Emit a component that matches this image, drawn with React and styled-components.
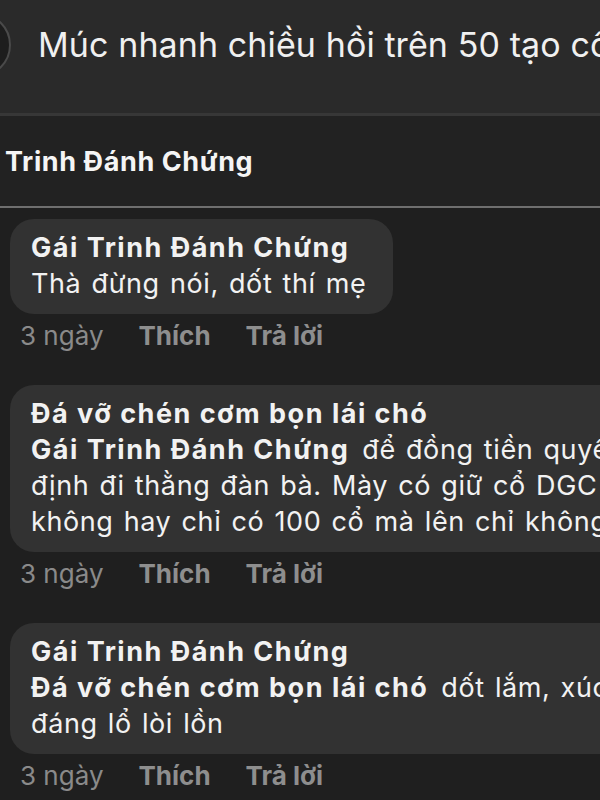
import React from "react";
import styled, { createGlobalStyle } from "styled-components";

const GlobalStyle = createGlobalStyle`
  html, body {
    margin: 0;
    padding: 0;
    background: #1f1f1f;
  }
  body {
    font-family: Inter, "Noto Sans", sans-serif;
    color: #f2f2f2;
  }
`;

const Page = styled.div`
  width: 600px;
  height: 800px;
  overflow: hidden;
  background: #1f1f1f;
`;

const TopBar = styled.header`
  display: flex;
  align-items: center;
  gap: 27px;
  height: 116px;
  padding-bottom: 24px;
  box-sizing: border-box;
  background: #2a2a2a;
  border-bottom: 3px solid #373737;
  overflow: hidden;
`;

const Avatar = styled.div`
  flex: none;
  width: 60px;
  height: 60px;
  margin-left: -53px;
  border-radius: 50%;
  background: #1d1d1d;
  border: 2px solid #4a4a4a;
`;

const Title = styled.h1`
  margin: 0;
  font-size: 34px;
  font-weight: 400;
  letter-spacing: 0.1px;
  white-space: nowrap;
  color: #f0f0f0;
`;

const PostHeader = styled.div`
  display: flex;
  align-items: center;
  height: 90px;
  padding-left: 5px;
  background: #222222;
  border-bottom: 2px solid #6f6f6f;
  font-size: 27px;
  font-weight: 700;
  letter-spacing: 0.6px;
  color: #f5f5f5;
`;

const List = styled.section`
  display: flex;
  flex-direction: column;
  gap: 31px;
  padding: 11px 0 0 10px;
`;

const Comment = styled.article`
  display: flex;
  flex-direction: column;
  align-items: flex-start;
`;

const Bubble = styled.div`
  box-sizing: border-box;
  width: ${(p) => p.$width}px;
  padding: 11px 22px 12px 21px;
  border-radius: 24px;
  background: #323232;
  font-size: 27px;
  line-height: 36px;
  letter-spacing: 0.6px;
  word-spacing: 2px;
`;

const Line = styled.div`
  white-space: nowrap;
`;

const Name = styled.span`
  font-weight: 700;
  letter-spacing: 1.5px;
  word-spacing: 0;
  margin-right: ${(p) => (p.$inline ? "13px" : "0")};
`;

const Meta = styled.div`
  display: flex;
  gap: 35px;
  margin-top: 4px;
  padding-left: 10px;
  font-size: 26px;
  line-height: 36px;
  color: #8a8a8a;
`;

const Action = styled.span`
  font-weight: 700;
  color: #8e8e8e;
`;

const comments = [
  {
    width: 383,
    lines: [
      { name: "Gái Trinh Đánh Chứng" },
      { text: "Thà đừng nói, dốt thí mẹ" },
    ],
  },
  {
    width: 640,
    lines: [
      { name: "Đá vỡ chén cơm bọn lái chó" },
      { name: "Gái Trinh Đánh Chứng", text: "để đồng tiền quyết" },
      { text: "định đi thằng đàn bà. Mày có giữ cổ DGC" },
      { text: "không hay chỉ có 100 cổ mà lên chỉ không" },
    ],
  },
  {
    width: 640,
    lines: [
      { name: "Gái Trinh Đánh Chứng" },
      { name: "Đá vỡ chén cơm bọn lái chó", text: "dốt lắm, xúc" },
      { text: "đáng lổ lòi lồn" },
    ],
  },
];

export default function App() {
  return (
    <Page>
      <GlobalStyle />
      <TopBar>
        <Avatar />
        <Title>Múc nhanh chiều hồi trên 50 tạo cổ</Title>
      </TopBar>
      <PostHeader>Trinh Đánh Chứng</PostHeader>
      <List>
        {comments.map((c, i) => (
          <Comment key={i}>
            <Bubble $width={c.width}>
              {c.lines.map((l, j) => (
                <Line key={j}>
                  {l.name && <Name $inline={!!l.text}>{l.name}</Name>}
                  {l.text}
                </Line>
              ))}
            </Bubble>
            <Meta>
              <span>3 ngày</span>
              <Action>Thích</Action>
              <Action>Trả lời</Action>
            </Meta>
          </Comment>
        ))}
      </List>
    </Page>
  );
}
